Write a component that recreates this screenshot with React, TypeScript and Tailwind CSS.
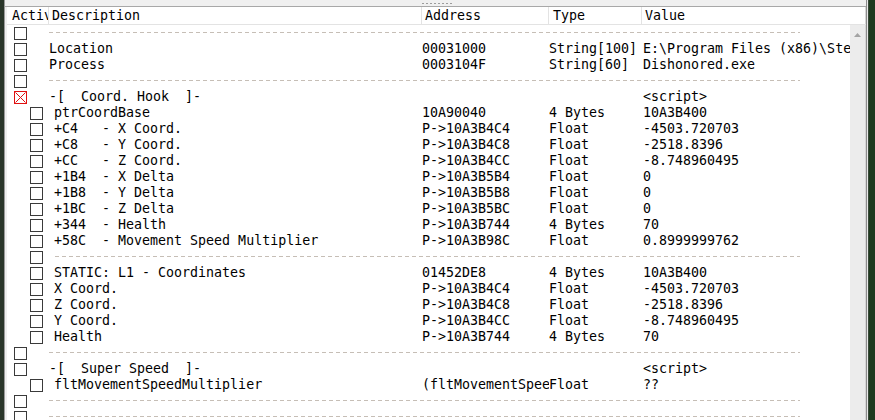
import React from 'react';

type Row =
  | { kind: 'sep'; nested?: boolean }
  | {
      kind: 'item';
      nested?: boolean;
      checked?: boolean;
      desc: string;
      address?: string;
      type?: string;
      value?: string;
    };

const rows: Row[] = [
  { kind: 'sep' },
  { kind: 'item', desc: 'Location', address: '00031000', type: 'String[100]', value: 'E:\\Program Files (x86)\\Steam\\steamapps\\common\\Dishonored\\Binaries\\Win32\\Dishonored.exe' },
  { kind: 'item', desc: 'Process', address: '0003104F', type: 'String[60]', value: 'Dishonored.exe' },
  { kind: 'sep' },
  { kind: 'item', checked: true, desc: '-[  Coord. Hook  ]-', value: '<script>' },
  { kind: 'item', nested: true, desc: 'ptrCoordBase', address: '10A90040', type: '4 Bytes', value: '10A3B400' },
  { kind: 'item', nested: true, desc: '+C4   - X Coord.', address: 'P->10A3B4C4', type: 'Float', value: '-4503.720703' },
  { kind: 'item', nested: true, desc: '+C8   - Y Coord.', address: 'P->10A3B4C8', type: 'Float', value: '-2518.8396' },
  { kind: 'item', nested: true, desc: '+CC   - Z Coord.', address: 'P->10A3B4CC', type: 'Float', value: '-8.748960495' },
  { kind: 'item', nested: true, desc: '+1B4  - X Delta', address: 'P->10A3B5B4', type: 'Float', value: '0' },
  { kind: 'item', nested: true, desc: '+1B8  - Y Delta', address: 'P->10A3B5B8', type: 'Float', value: '0' },
  { kind: 'item', nested: true, desc: '+1BC  - Z Delta', address: 'P->10A3B5BC', type: 'Float', value: '0' },
  { kind: 'item', nested: true, desc: '+344  - Health', address: 'P->10A3B744', type: '4 Bytes', value: '70' },
  { kind: 'item', nested: true, desc: '+58C  - Movement Speed Multiplier', address: 'P->10A3B98C', type: 'Float', value: '0.8999999762' },
  { kind: 'sep', nested: true },
  { kind: 'item', nested: true, desc: 'STATIC: L1 - Coordinates', address: '01452DE8', type: '4 Bytes', value: '10A3B400' },
  { kind: 'item', nested: true, desc: 'X Coord.', address: 'P->10A3B4C4', type: 'Float', value: '-4503.720703' },
  { kind: 'item', nested: true, desc: 'Z Coord.', address: 'P->10A3B4C8', type: 'Float', value: '-2518.8396' },
  { kind: 'item', nested: true, desc: 'Y Coord.', address: 'P->10A3B4CC', type: 'Float', value: '-8.748960495' },
  { kind: 'item', nested: true, desc: 'Health', address: 'P->10A3B744', type: '4 Bytes', value: '70' },
  { kind: 'sep' },
  { kind: 'item', desc: '-[  Super Speed  ]-', value: '<script>' },
  { kind: 'item', nested: true, desc: 'fltMovementSpeedMultiplier', address: '(fltMovementSpeedMultiplier)', type: 'Float', value: '??' },
  { kind: 'sep' },
  { kind: 'sep' },
];

const CheckBox: React.FC<{ checked?: boolean }> = ({ checked }) =>
  checked ? (
    <svg width="13" height="13" viewBox="0 0 13 13" className="block">
      <rect x="0.5" y="0.5" width="12" height="12" fill="#fff" stroke="#e01010" />
      <path d="M1.5 1.5 L11.5 11.5 M11.5 1.5 L1.5 11.5" stroke="#e01010" strokeWidth="1" />
    </svg>
  ) : (
    <div className="w-[13px] h-[13px] border border-[#3a3a3a] bg-white" />
  );

const App: React.FC = () => {
  return (
    <div className="w-[875px] h-[420px] flex overflow-hidden bg-[#1e2e1e] font-['DejaVu_Sans_Mono',monospace] text-[13.3px] leading-4 text-black">
      {/* left frame */}
      <div className="w-[4px] bg-[#2a362a]" />
      <div className="w-px bg-[#9a9a9a]" />

      {/* main panel */}
      <div className="w-[861px] flex flex-col bg-[#f0f0f0]">
        {/* splitter band */}
        <div className="h-[6px] flex justify-start items-center shrink-0">
          <div className="ml-[417px] flex gap-[2px]">
            {Array.from({ length: 8 }).map((_, i) => (
              <div key={i} className="w-[2px] h-px bg-[#9c9c9c]" />
            ))}
          </div>
        </div>
        <div className="h-px bg-[#a8a8a8] shrink-0" />

        <div className="flex-1 flex flex-col ml-[2px] bg-white min-h-0">
          {/* header */}
          <div className="h-[18px] flex border-b border-[#e3e3e3] shrink-0 leading-[18px]">
            <div className="w-[42px] pl-[5px] border-r border-[#e3e3e3] overflow-hidden whitespace-pre">Active</div>
            <div className="w-[373px] pl-[3px] border-r border-[#e3e3e3]">Description</div>
            <div className="w-[127px] pl-[3px] border-r border-[#e3e3e3]">Address</div>
            <div className="w-[93px] pl-[4px] border-r border-[#e3e3e3]">Type</div>
            <div className="flex-1 pl-[3px] border-r border-[#d6d6d6]">Value</div>
          </div>

          <div className="flex-1 flex min-h-0">
            {/* list */}
            <div className="flex-1 overflow-hidden">
              {rows.map((row, i) => (
                <div key={i} className="h-4 flex items-center">
                  <div className={`w-[42px] shrink-0 ${row.nested ? 'pl-[23px]' : 'pl-[7px]'}`}>
                    <CheckBox checked={row.kind === 'item' && row.checked} />
                  </div>
                  {row.kind === 'sep' ? (
                    <div
                      className={`h-px -mt-[2px] bg-[repeating-linear-gradient(90deg,#c6beb6_0_4px,transparent_4px_7px)] ${
                        row.nested ? 'ml-[6px] w-[745px]' : 'w-[751px]'
                      }`}
                    />
                  ) : (
                    <>
                      <div className={`w-[373px] shrink-0 whitespace-pre overflow-hidden ${row.nested ? 'pl-[5px]' : ''}`}>
                        {row.desc}
                      </div>
                      <div className="w-[127px] shrink-0 whitespace-pre overflow-hidden">{row.address}</div>
                      <div className="w-[93px] shrink-0 whitespace-pre overflow-hidden">{row.type}</div>
                      <div className="flex-1 pl-px whitespace-pre overflow-hidden">{row.value}</div>
                    </>
                  )}
                </div>
              ))}
            </div>

            {/* scrollbar */}
            <div className="w-[16px] bg-[#ececec] border-r border-[#d6d6d6] flex justify-center pt-[8px] shrink-0">
              <svg width="7" height="4" viewBox="0 0 7 4" className="block">
                <path d="M3.5 0 L7 4 L0 4 Z" fill="#a3a3a3" />
              </svg>
            </div>
          </div>
        </div>
      </div>

      {/* right frame */}
      <div className="w-px bg-[#8c8c8c]" />
      <div className="w-px bg-[#e8e8e8]" />
      <div className="w-px bg-[#3a4a3a]" />
      <div className="flex-1 bg-[#1f3a1f]" />
    </div>
  );
};

export default App;
